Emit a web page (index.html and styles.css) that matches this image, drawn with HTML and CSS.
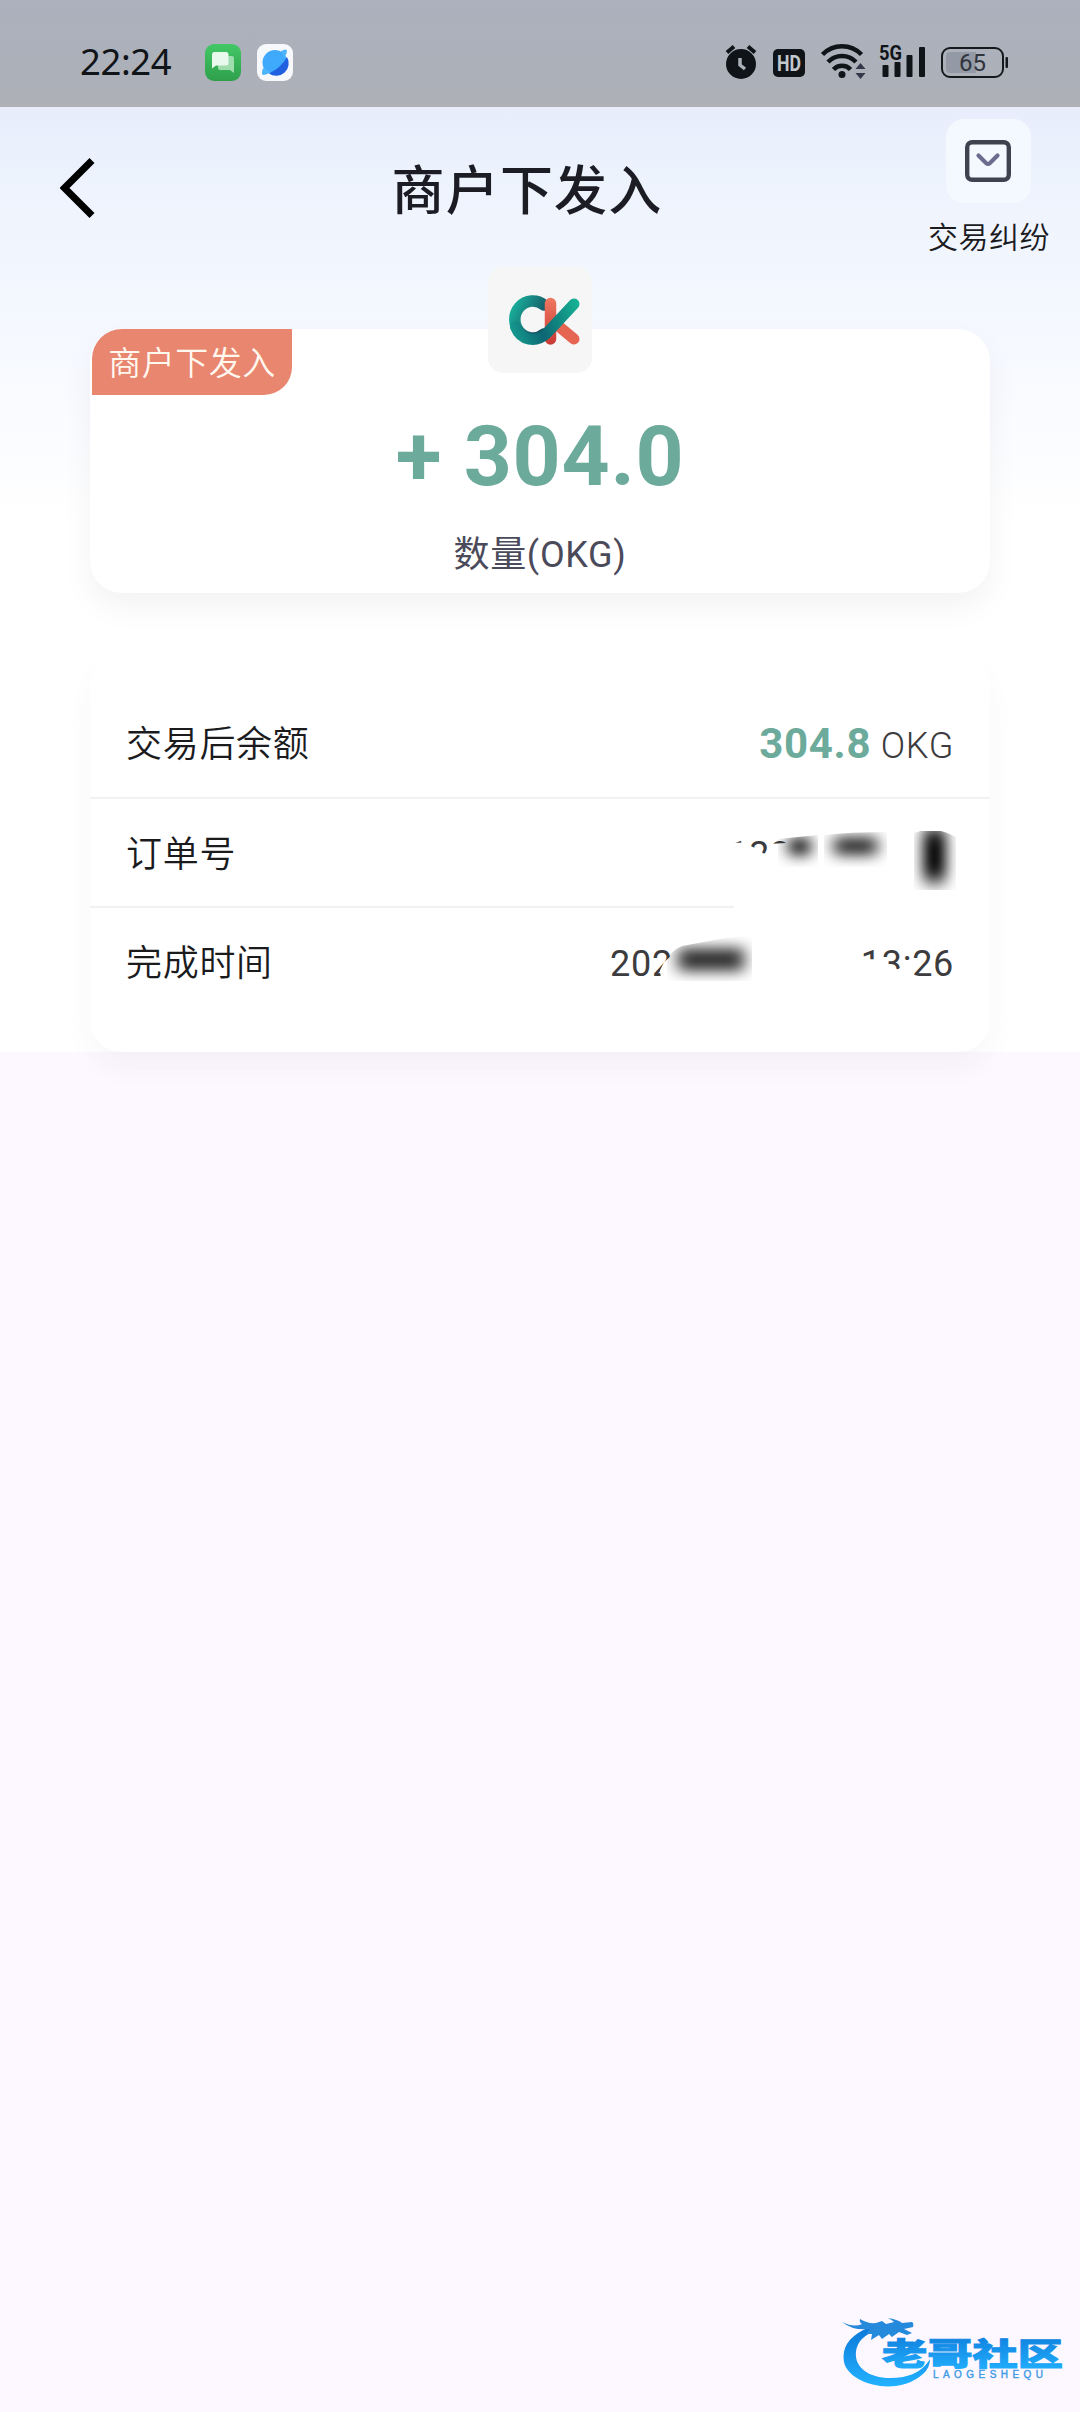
FILE: index.html
```html
<!DOCTYPE html>
<html lang="zh-CN">
<head>
<meta charset="utf-8">
<title>商户下发入</title>
<link rel="stylesheet" href="styles.css">
</head>
<body>
<div class="screen">
  <div class="status-bar">
    <span class="clock">22:24</span>
    <svg class="app-icon" width="36" height="37" viewBox="0 0 36 37">
      <defs><linearGradient id="msg" x1="0" y1="0" x2="0" y2="1"><stop offset="0" stop-color="#43c866"/><stop offset="1" stop-color="#2f9f4c"/></linearGradient></defs>
      <rect width="36" height="37" rx="9" fill="url(#msg)"/>
      <path d="M15 12h12q2 0 2 2v15l-4-3H15q-2 0-2-2V14q0-2 2-2z" fill="#9fdcae"/>
      <path d="M9 8h12q2.500 0 2.500 2.500V19q0 2.500-2.500 2.500H11l-4 3V10.500Q7 8 9 8z" fill="#eaf9ee"/>
    </svg>
    <svg class="app-icon browser" width="36" height="37" viewBox="0 0 36 37">
      <rect width="36" height="37" rx="9" fill="#f6f8fb"/>
      <circle cx="18" cy="18.500" r="12.500" fill="#3fa9fb"/>
      <path d="M30 13A12.500 12.500 0 0 1 12 29.500Q24 24 30 13z" fill="#1f5fe0"/>
      <path d="M24 7q6-3 6 0 0 3-3 7zM6 24q-2 6 0 7 3 0 8-3z" fill="#4db4fc"/>
    </svg>
    <svg class="system-icons" width="290" height="44" viewBox="0 0 290 44">
      <g fill="#101418">
        <circle cx="16" cy="24" r="15"/>
        <path d="M2 12.500L9 6.500M30 12.500L23 6.500" stroke="#101418" stroke-width="4" fill="none"/>
        <path d="M15 18v7l5 4" stroke="#abb0b9" stroke-width="3.500" fill="none"/>
        <rect x="48" y="9" width="32" height="28" rx="5"/>
        <text x="64" y="31" text-anchor="middle" font-size="22" font-weight="700" class="sys-text" fill="#c3c7ce" textLength="24" lengthAdjust="spacingAndGlyphs">HD</text>
        <circle cx="117" cy="34.500" r="3.500"/>
        <g fill="none" stroke="#101418" stroke-width="4.500">
          <path d="M97.500 14.500a27 27 0 0 1 39 0"/><path d="M103 22a19.500 19.500 0 0 1 28 0"/><path d="M108.500 29.500a11.500 11.500 0 0 1 17 0"/>
        </g>
        <path d="M130.500 29l5-6 5 6zM130.500 33l5 6 5-6z" fill="#33384a"/>
        <text x="154" y="20" font-size="21" font-weight="700" class="sys-text" textLength="23" lengthAdjust="spacingAndGlyphs">5G</text>
        <rect x="157.500" y="25" width="6" height="12" rx="1"/><rect x="169.500" y="22" width="6" height="15" rx="1"/><rect x="181.500" y="15" width="6" height="22" rx="1"/><rect x="194" y="7" width="6" height="30" rx="1"/>
      </g>
      <rect x="217" y="8" width="61" height="29" rx="8" fill="none" stroke="#15191d" stroke-width="2"/>
      <path d="M225 12h26v21h-26q-4 0-4-4V16q0-4 4-4z" fill="#939aa6"/>
      <rect x="280.500" y="17" width="2.500" height="11" rx="1" fill="#15191d"/>
      <text x="247.500" y="31" text-anchor="middle" font-size="24" class="sys-text" fill="#30343c">65</text>
    </svg>
  </div>

  <div class="content">
    <header class="header">
      <svg class="back" width="36" height="62" viewBox="0 0 36 62"><path d="M32 3.500L4.500 31 32 58.500" fill="none" stroke="#000" stroke-width="7"/></svg>
      <h1 class="title">商户下发入</h1>
      <div class="dispute">
        <div class="dispute-button">
          <svg width="46" height="42" viewBox="0 0 46 42" fill="none">
            <rect x="2.200" y="2.200" width="41.600" height="37.600" rx="5" stroke="#40434f" stroke-width="4.400"/>
            <path d="M13.500 15.500l7.500 7.500q2 1.800 4 0l7.500-7.500" stroke="#6c6d8e" stroke-width="4.200" stroke-linecap="round"/>
          </svg>
        </div>
        <span class="dispute-label">交易纠纷</span>
      </div>
    </header>

    <section class="card summary">
      <span class="tag">商户下发入</span>
      <div class="coin">
        <svg width="104" height="106" viewBox="0 0 104 106" fill="none" stroke-linecap="round">
          <defs>
            <linearGradient id="teal" x1="22" y1="70" x2="91" y2="38" gradientUnits="userSpaceOnUse"><stop offset="0" stop-color="#16a092"/><stop offset=".400" stop-color="#0d6672"/><stop offset="1" stop-color="#16b294"/></linearGradient>
            <linearGradient id="ring" x1="22" y1="40" x2="62" y2="60" gradientUnits="userSpaceOnUse"><stop offset="0" stop-color="#18b39d"/><stop offset="1" stop-color="#183b55"/></linearGradient>
            <linearGradient id="coral" x1="0" y1="32" x2="0" y2="76" gradientUnits="userSpaceOnUse"><stop offset="0" stop-color="#ef7660"/><stop offset="1" stop-color="#c93c36"/></linearGradient>
          </defs>
          <path d="M68 57L86 72" stroke="#e66452" stroke-width="11"/>
          <path d="M56 38A18 18.500 0 1 0 56 67" stroke="url(#ring)" stroke-width="11.500"/>
          <path d="M62.500 36.500V72" stroke="url(#coral)" stroke-width="11.500"/>
          <path d="M27.500 60C33 74 48 76 58 67L86 37" stroke="url(#teal)" stroke-width="11"/>
        </svg>
      </div>
      <div class="amount">+ 304.0</div>
      <div class="unit">数量(OKG)</div>
    </section>

    <section class="card details">
      <div class="row">
        <span class="label">交易后余额</span>
        <span class="value balance"><b>304.8</b> OKG</span>
      </div>
      <div class="row short-line">
        <span class="label">订单号</span>
        <span class="value order">123</span>
      </div>
      <div class="row">
        <span class="label">完成时间</span>
        <span class="value time"><span class="date">202</span><span class="hour">13:26</span></span>
      </div>
      <svg class="smudges" width="310" height="170" viewBox="0 0 310 170">
        <defs>
          <filter id="soft" x="-80%" y="-150%" width="260%" height="400%"><feGaussianBlur stdDeviation="8 7"/></filter>
          <filter id="soft-tall" x="-150%" y="-80%" width="400%" height="260%"><feGaussianBlur stdDeviation="7 9"/></filter>
          <clipPath id="c1"><path d="M128 8L168 4V36H128z"/></clipPath>
          <clipPath id="c2"><path d="M174 4Q200 1 237 1V36H174z"/></clipPath>
          <clipPath id="c3"><path d="M264 2Q285-6 306 6V59H264z"/></clipPath>
          <clipPath id="c4"><path d="M17 128Q22 119 32 115L75 107Q90 105 102 105V150H17z"/></clipPath>
        </defs>
        <g clip-path="url(#c1)"><rect x="139" y="7" width="21" height="17" fill="#000" filter="url(#soft)"/></g>
        <g clip-path="url(#c2)"><rect x="184" y="6" width="43" height="18" fill="#000" opacity=".850" filter="url(#soft)"/></g>
        <g clip-path="url(#c3)"><rect x="273" y="-2" width="23" height="52" fill="#000" filter="url(#soft-tall)"/></g>
        <g clip-path="url(#c4)"><rect x="28" y="117" width="66" height="23" fill="#000" opacity=".820" filter="url(#soft)"/></g>
      </svg>
    </section>
  </div>

  <svg class="watermark" width="224" height="76" viewBox="0 0 224 76">
    <defs><linearGradient id="blue" x1="0" y1="0" x2="0" y2="1"><stop offset="0" stop-color="#0d78d8"/><stop offset="1" stop-color="#22b2ff"/></linearGradient></defs>
    <path d="M30 12Q0 24 4 47C9 70 58 82 83 59Q90 53 90 44Q82 58 63 62C31 67 14 53 16 37Q17 23 35 16z" fill="url(#blue)"/>
    <path d="M2 7Q14 13 22 9Q19 7 20 4Q28 9 36 8L42 6 46 9 54 7Q52 5 48 3 59 5 62 8L72 7Q74 8 73 12L64 14 72 18 67 20 59 17 52 22 49 19 42 24 39 20 31 25 32 19 26 19 30 14Q13 16 2 7z" fill="#2589dc"/>
    <text class="mark-name" x="42" y="49.500" font-size="31" textLength="181" lengthAdjust="spacingAndGlyphs" fill="url(#blue)" stroke="url(#blue)" stroke-width="1">老哥社区</text>
    <text class="mark-latin" x="93" y="63" font-size="10" textLength="110" fill="#3f9be6" stroke="#3f9be6" stroke-width=".400">LAOGESHEQU</text>
  </svg>
</div>
</body>
</html>
```
FILE: styles.css
```css
* { box-sizing: border-box; }

body {
  margin: 0;
  font-family: Roboto, "Noto Sans CJK SC", sans-serif;
  color: #1b1b1e;
}

.screen {
  position: relative;
  height: 2412px;
  overflow: hidden;
  background: #fdf7ff;
}

.status-bar {
  height: 107px;
  padding: 0 65px 0 80px;
  display: flex;
  align-items: center;
  background: linear-gradient(#abb1bd, #adb0b8 85%, #aeb0b4);
}

.clock {
  width: 125px;
  font: 36.500px/1 "Noto Sans", sans-serif;
  letter-spacing: -0.400px;
  color: #101418;
  padding-top: 16px;
}

.app-icon { margin-top: 44px; align-self: flex-start; flex: none; }
.browser { margin-left: 16px; }
.system-icons { margin: 40px 0 0 auto; align-self: flex-start; }
.sys-text { font-family: Roboto, sans-serif; }

.content {
  height: 945px;
  background: linear-gradient(#e7edfb, #edf3fd 70px, #f5f8ff 220px, #fff 410px);
}

.header {
  height: 222px;
  padding-right: 30px;
  display: grid;
  grid-template-columns: 126px 1fr 122px;
}

.back { margin: 50px 0 0 60px; }

.title {
  margin: 46px 0 0;
  font-size: 53px;
  line-height: 78px;
  font-weight: 500;
  letter-spacing: 1.200px;
  text-align: center;
  color: #1c1c24;
}

.dispute {
  display: flex;
  flex-direction: column;
  align-items: center;
  padding-top: 12px;
}

.dispute-button {
  width: 85px;
  height: 84px;
  margin-left: -2px;
  border-radius: 18px;
  background: #f4f8ff;
  display: grid;
  place-items: center;
}

.dispute-label {
  margin-top: 15px;
  font-size: 30px;
  line-height: 40px;
  font-weight: 350;
  letter-spacing: 0.500px;
  white-space: nowrap;
}

.card {
  position: relative;
  width: 900px;
  margin: 0 auto;
  border-radius: 32px;
  background: #fff;
  box-shadow: 0 14px 32px rgba(0, 0, 0, 0.05);
}

.summary {
  height: 264px;
  display: flex;
  flex-direction: column;
  align-items: center;
}

.tag {
  position: absolute;
  left: 2px;
  top: 0;
  width: 200px;
  height: 66px;
  border-radius: 30px 0 28px 0;
  background: #e98670;
  color: #fff8ef;
  font-size: 33px;
  line-height: 69px;
  font-weight: 350;
  letter-spacing: 0.500px;
  text-align: center;
}

.coin {
  width: 104px;
  height: 106px;
  margin-top: -62px;
  border-radius: 15px;
  background: #f6f6f6;
}

.amount {
  margin-top: 34px;
  font-size: 84px;
  line-height: 100px;
  font-weight: 700;
  letter-spacing: 0.700px;
  color: #6caa9b;
}

.unit {
  margin-top: 22px;
  font-size: 36px;
  line-height: 52px;
  letter-spacing: 0.700px;
  color: #4b4a5a;
}

.details {
  height: 398px;
  margin-top: 61px;
  padding-top: 35px;
  box-shadow: 0 16px 30px -2px rgba(40, 60, 40, 0.045);
}

.row {
  height: 109.500px;
  padding: 3px 36px 0;
  display: flex;
  align-items: center;
  justify-content: space-between;
  background: linear-gradient(#f2f2f3, #f2f2f3) left bottom / 100% 2px no-repeat;
}

.row:nth-child(3) { background: none; }
.short-line { background-size: 644px 2px; }

.label,
.value {
  font-size: 36px;
  line-height: 52px;
  letter-spacing: 0.700px;
}

.label { font-weight: 350; }
.value { color: #3c3c3e; }
.balance { font-weight: 300; }
.balance b { font-size: 42px; font-weight: 700; color: #6caa9b; letter-spacing: 0.700px; }

.order {
  margin-right: 163px;
  clip-path: polygon(0 0, 100% 0, 100% 14px, 44px 15px, 40px 22px, 36px 25px, 30px 21px, 24px 18px, 15px 14px, 0 14px);
}

.time { display: flex; gap: 188px; }
.date { clip-path: polygon(0 0, 100% 0, 100% 16px, 54px 24px, 50px 32px, 52px 52px, 0 52px); }
.hour { clip-path: polygon(0 0, 100% 0, 100% 52px, 68px 42px, 64px 39px, 50px 36px, 50px 28px, 42px 28px, 37px 31px, 24px 27px, 18px 21px, 0 21px); }

.smudges {
  position: absolute;
  left: 560px;
  top: 177px;
}

.watermark {
  position: absolute;
  left: 840px;
  top: 2315px;
}

.mark-name { font-family: "Noto Sans CJK SC", sans-serif; font-weight: 900; }
.mark-latin { font-family: "Liberation Sans", sans-serif; }
```
